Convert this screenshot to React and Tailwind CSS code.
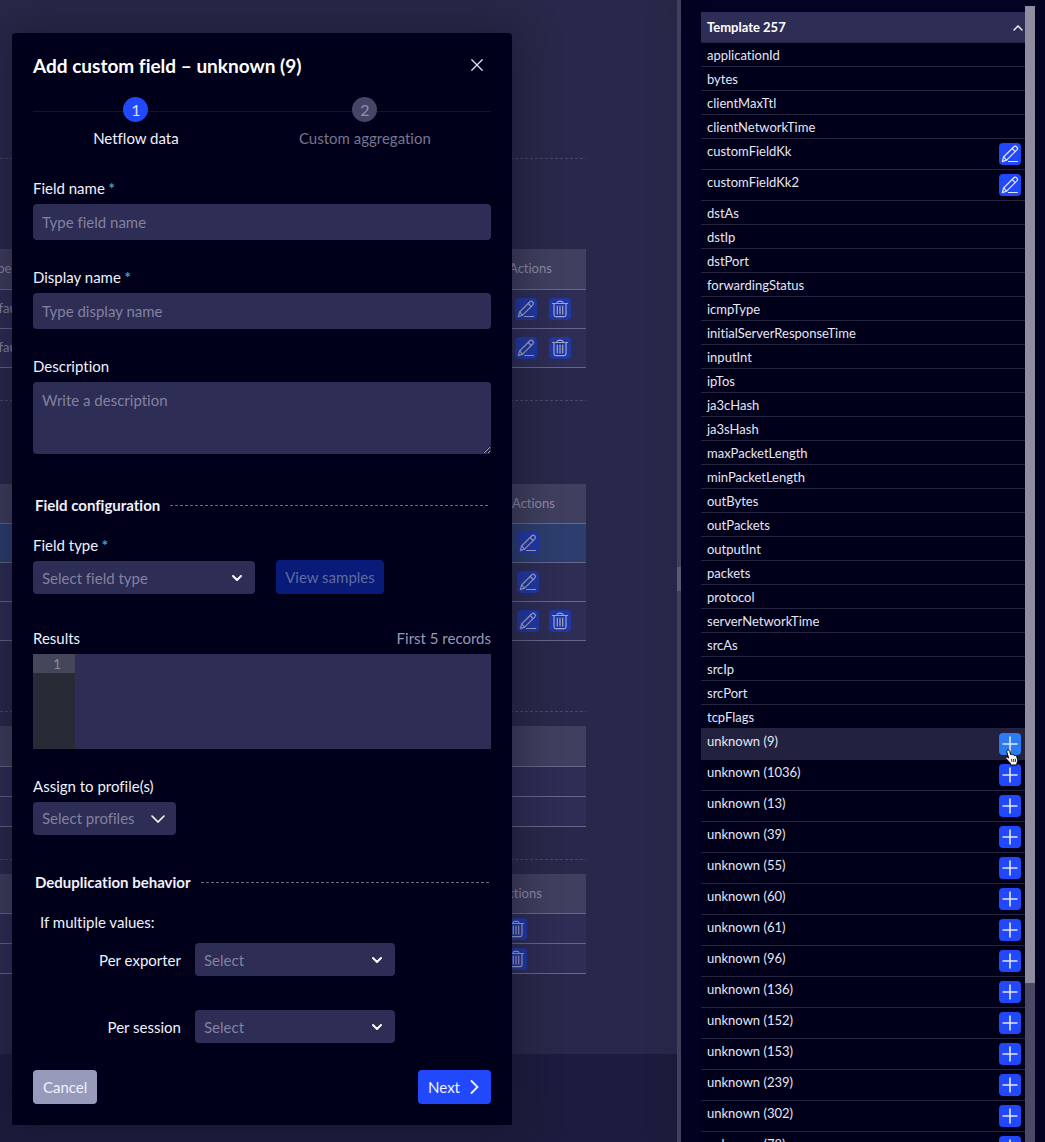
import React from "react";

const fields = [
  ["applicationId"], ["bytes"], ["clientMaxTtl"], ["clientNetworkTime"],
  ["customFieldKk", "edit"], ["customFieldKk2", "edit"],
  ["dstAs"], ["dstIp"], ["dstPort"], ["forwardingStatus"], ["icmpType"],
  ["initialServerResponseTime"], ["inputInt"], ["ipTos"], ["ja3cHash"], ["ja3sHash"],
  ["maxPacketLength"], ["minPacketLength"], ["outBytes"], ["outPackets"], ["outputInt"],
  ["packets"], ["protocol"], ["serverNetworkTime"], ["srcAs"], ["srcIp"], ["srcPort"], ["tcpFlags"],
  ["unknown (9)", "add", true], ["unknown (1036)", "add"], ["unknown (13)", "add"],
  ["unknown (39)", "add"], ["unknown (55)", "add"], ["unknown (60)", "add"],
  ["unknown (61)", "add"], ["unknown (96)", "add"], ["unknown (136)", "add"],
  ["unknown (152)", "add"], ["unknown (153)", "add"], ["unknown (239)", "add"],
  ["unknown (302)", "add"], ["unknown (78)", "add"],
];

function Pencil() {
  return (
    <svg viewBox="0 0 22 22" className="size-full" fill="none" stroke="currentColor" strokeWidth="1.2" strokeLinejoin="round" strokeLinecap="round" aria-hidden="true">
      <path d="M3.3 18.6 4.6 14 14.9 3.8c1.7-1.6 4.8 1.1 3 3.1L7.6 17.1 3.3 18.6Z" />
      <path d="m13.2 5.5 3 3.1M4.6 14l3 3.1M9.5 18.5h9" />
    </svg>
  );
}

function Trash() {
  return (
    <svg viewBox="0 0 22 22" className="size-full" fill="none" stroke="currentColor" strokeWidth="1.2" strokeLinejoin="round" strokeLinecap="round" aria-hidden="true">
      <path d="M3.5 5.5h15M8 5.2c0-1.5.4-1.9 1.4-1.9h3.2c1 0 1.4.4 1.4 1.9M5 5.7v11.1c0 1.2.6 1.8 1.7 1.8h8.6c1.1 0 1.7-.6 1.7-1.8V5.7M8.3 8v8M11 8v8M13.7 8v8" />
    </svg>
  );
}

function Plus() {
  return (
    <svg viewBox="0 0 22 22" className="size-full" fill="none" stroke="currentColor" strokeWidth="1.6" aria-hidden="true">
      <path d="M3.5 11h15M11 3.5v15" />
    </svg>
  );
}

function Chevron({ thin }) {
  return thin ? (
    <svg viewBox="0 0 14 8" className="w-[14px]" fill="none" stroke="currentColor" strokeWidth="1.6" strokeLinecap="round" aria-hidden="true">
      <path d="m1 1 6 6 6-6" />
    </svg>
  ) : (
    <svg viewBox="0 0 12 8" className="w-3" fill="none" stroke="currentColor" strokeWidth="2" strokeLinecap="round" strokeLinejoin="round" aria-hidden="true">
      <path d="m2 2 4 4 4-4" />
    </svg>
  );
}

function DimButton({ kind }) {
  return (
    <button type="button" aria-label={kind === "edit" ? "Edit" : "Delete"} className="block size-[22px] rounded-sm bg-[#2038a6] text-[#a3a5c9]">
      {kind === "edit" ? <Pencil /> : <Trash />}
    </button>
  );
}

function BackTable({ type, actions, row, rows, headPad, pad, gap }) {
  return (
    <table className="-ml-10 w-[calc(100%+40px)] table-fixed border-collapse text-left text-[13px] text-[#8d8ba8]">
      <thead>
        <tr className="h-10 border-b border-[#67678a] bg-[#3f3f5f]">
          <th className="pl-6 font-normal">{type}</th>
          <th className={`${headPad} font-normal`}>{actions}</th>
        </tr>
      </thead>
      <tbody>
        {rows.map((r, i) => (
          <tr key={i} className={`${row} border-b border-[#67678a] ${r.active ? "bg-[#2c3e6e]" : "bg-[#2d2d55]"}`}>
            <td className="pl-[22px]">{r.text}</td>
            <td className={pad}>
              <div className={`flex ${gap}`}>{r.icons.map((k) => <DimButton key={k} kind={k} />)}</div>
            </td>
          </tr>
        ))}
      </tbody>
    </table>
  );
}

const Dash = ({ color }) => (
  <svg className={`block h-px w-full ${color}`} aria-hidden="true">
    <line x1="0" y1="0.5" x2="100%" y2="0.5" stroke="currentColor" strokeDasharray="3 2" />
  </svg>
);

function SectionTitle({ children }) {
  return (
    <div className="flex items-center gap-2.5 px-0.5">
      <h3 className="shrink-0 text-[15px] leading-6 font-bold">{children}</h3>
      <Dash color="text-[#6b6b88]" />
    </div>
  );
}

function Label({ id, required, children }) {
  return (
    <label htmlFor={id} className="block text-[15px] leading-6">
      {children}{required && <span className="leading-none font-bold text-[#3aa5d2]"> *</span>}
    </label>
  );
}

function Select({ id, text, width, thin }) {
  return (
    <div className={`relative ${width}`}>
      <select id={id} defaultValue="" className={`block h-[33px] w-full appearance-none rounded bg-[#2d2d55] pr-8 pl-[9px] text-[15px] text-[#8381a0] outline-none ${thin ? "" : "pt-0.5"}`}>
        <option value="">{text}</option>
      </select>
      <span className={`pointer-events-none absolute inset-y-0 flex items-center text-white ${thin ? "right-[11px]" : "right-3"}`}>
        <Chevron thin={thin} />
      </span>
    </div>
  );
}

function HandCursor() {
  return (
    <svg viewBox="0 0 14 17" className="pointer-events-none absolute top-4 left-1.5 z-10 h-[17px] w-[14px]" aria-hidden="true">
      <path d="M3.2 1c1 0 1.5.8 1.7 1.7l.7 3c.5-.6 1.7-.5 2 .3.6-.5 1.6-.3 1.9.5.9-.4 1.9.1 2.2 1.1l.9 2.8c.3 1.500-.2 2.600-.7 3.600v2H5.500v-1.500C4.300 13.200 2.900 11.300 1.100 9.700.3 8.800 1.300 7.500 2.500 8.200l1.100.8L1.800 3C1.600 2 2.200 1 3.200 1Z" fill="white" stroke="black" strokeWidth="1" />
      <path d="m6.500 10 .5 3M8.500 10l.4 3M10.300 9.800l.3 3" stroke="black" strokeWidth=".8" />
    </svg>
  );
}

function Dialog() {
  return (
    <section role="dialog" aria-labelledby="title" className="absolute top-[33px] left-3 flex w-[500px] flex-col rounded-t bg-[#00001a] px-[21px] pt-5 pb-[21px] text-[#f1f1fa] shadow-[0_0_40px_8px_rgba(20,20,40,0.45)]">
      <header className="flex h-[26px] items-start justify-between">
        <h2 id="title" className="text-[19px] leading-[25px] font-bold text-white">Add custom field – unknown (9)</h2>
        <button type="button" aria-label="Close" className="mt-1.5 mr-2 text-[#e2e2f2]">
          <svg viewBox="0 0 12 12" className="size-3" fill="none" stroke="currentColor" strokeWidth="1.300" strokeLinecap="round" aria-hidden="true"><path d="m.8.8 10.400 10.400M11.200.8.8 11.200" /></svg>
        </button>
      </header>

      <div className="relative mt-[18px]">
        <div className="absolute top-[14px] h-px w-full bg-[#14142c]" />
        <ol className="relative flex justify-around text-[15px]">
          <li className="flex flex-col items-center gap-1">
            <span className="grid size-[25px] place-items-center rounded-full bg-[#2148fa] text-base leading-none text-[#d9e0ff]">1</span>
            <span className="leading-6">Netflow data</span>
          </li>
          <li className="flex flex-col items-center gap-1 text-[#77758e]">
            <span className="grid size-[25px] place-items-center rounded-full bg-[#454568] text-base leading-none text-[#9190ac]">2</span>
            <span className="leading-6">Custom aggregation</span>
          </li>
        </ol>
      </div>

      <form className="mt-[26px] flex flex-col">
        <div className="flex flex-col gap-[25px]">
          <div className="flex flex-col gap-1">
            <Label id="fname" required>Field name</Label>
            <input id="fname" placeholder="Type field name" className="h-9 rounded bg-[#2d2d55] px-[9px] text-[15px] outline-none placeholder:text-[#8381a0]" />
          </div>
          <div className="flex flex-col gap-1">
            <Label id="dname" required>Display name</Label>
            <input id="dname" placeholder="Type display name" className="h-9 rounded bg-[#2d2d55] px-[9px] text-[15px] outline-none placeholder:text-[#8381a0]" />
          </div>
          <div className="flex flex-col gap-1">
            <Label id="desc">Description</Label>
            <textarea id="desc" placeholder="Write a description" className="h-[72px] rounded bg-[#2d2d55] px-[9px] py-1.5 text-[15px] leading-6 outline-none placeholder:text-[#8381a0]" />
          </div>
        </div>

        <div className="mt-[39px]"><SectionTitle>Field configuration</SectionTitle></div>

        <div className="mt-4 flex items-end gap-[21px]">
          <div className="flex flex-col gap-1">
            <Label id="ftype" required>Field type</Label>
            <Select id="ftype" text="Select field type" width="w-[222px]" />
          </div>
          <button type="button" disabled className="h-[34px] w-[108px] rounded bg-[#081b78] text-[15px] text-[#5f6b9f]">View samples</button>
        </div>

        <div className="mt-8 flex flex-col gap-1">
          <div className="flex justify-between text-[15px] leading-6">
            <label htmlFor="results">Results</label>
            <span className="text-[#9a98b4]">First 5 records</span>
          </div>
          <div className="flex h-[95px] bg-[#2d2d55]">
            <div className="w-[42px] shrink-0 bg-[#282a36]">
              <div className="h-[19px] bg-[#44465a] pr-3.5 text-right text-sm leading-[19px] text-[#8a8b96]">1</div>
            </div>
            <textarea id="results" readOnly className="w-full resize-none bg-transparent outline-none" />
          </div>
        </div>

        <div className="mt-[25px] flex flex-col gap-1">
          <Label id="profiles">Assign to profile(s)</Label>
          <Select id="profiles" text="Select profiles" width="w-[143px]" thin />
        </div>

        <div className="mt-[35px]"><SectionTitle>Deduplication behavior</SectionTitle></div>

        <p className="mt-4 pl-[7px] text-[15px] leading-6">If multiple values:</p>
        <div className="mt-[9px] grid grid-cols-[148px_200px] items-center gap-x-3.5 gap-y-[34px]">
          <div className="text-right"><Label id="exporter">Per exporter</Label></div>
          <Select id="exporter" text="Select" width="w-full" />
          <div className="text-right"><Label id="session">Per session</Label></div>
          <Select id="session" text="Select" width="w-full" />
        </div>

        <footer className="mt-[27px] flex justify-between text-[15px]">
          <button type="button" className="h-[34px] rounded bg-[#989abb] px-2.5">Cancel</button>
          <button type="button" className="flex h-[34px] items-center gap-2.5 rounded bg-[#2148fa] pr-3 pl-2.5">
            Next
            <svg viewBox="0 0 9 14" className="w-[9px]" fill="none" stroke="currentColor" strokeWidth="1.800" strokeLinecap="round" aria-hidden="true"><path d="m1.500 1 6 6-6 6" /></svg>
          </button>
        </footer>
      </form>
    </section>
  );
}

export default function App() {
  return (
    <div className="relative flex h-screen overflow-hidden bg-[#020222] font-['Lato',sans-serif] [font-variant-ligatures:none]">
      <main className="min-w-0 flex-1 overflow-hidden bg-[#1c1c3e]">
        <div className="bg-[#28284a] pt-[158px] pr-[91px] pb-20">
          <Dash color="text-[#484868]" />
          <div className="mt-[90px]">
            <BackTable type="Type" actions="Actions" row="h-[39px]" headPad="pl-[236px]" pad="pl-[242px]" gap="gap-3"
              rows={[{ text: "Default", icons: ["edit", "trash"] }, { text: "Default", icons: ["edit", "trash"] }]} />
          </div>
          <div className="mt-8"><Dash color="text-[#484868]" /></div>
          <div className="mt-[83px]">
            <BackTable actions="Actions" row="h-[39px]" headPad="pl-[239px]" pad="pl-[244px]" gap="gap-2.5"
              rows={[{ active: true, icons: ["edit"] }, { icons: ["edit"] }, { icons: ["edit", "trash"] }]} />
          </div>
          <div className="mt-[70px]"><Dash color="text-[#484868]" /></div>
          <div className="mt-3.5">
            <BackTable row="h-[30px]" headPad="pl-[226px]" pad="pl-[232px]" gap="gap-2"
              rows={[{ icons: [] }, { icons: [] }]} />
          </div>
          <div className="mt-8"><Dash color="text-[#484868]" /></div>
          <div className="mt-3.5">
            <BackTable actions="Actions" row="h-[30px]" headPad="pl-[226px]" pad="pl-[232px]" gap="gap-2"
              rows={[{ icons: ["trash"] }, { icons: ["trash"] }]} />
          </div>
        </div>
      </main>

      <div className="flex w-1 shrink-0 items-center bg-[#40405d] shadow-[0_0_30px_rgba(10,10,30,0.4)]">
        <div className="mt-4 h-6 w-full bg-[#5a5a76]" />
      </div>

      <aside className="flex w-[364px] shrink-0 pt-1.5 pr-2.5 pl-5">
        <div className="mt-1.5 min-w-0 flex-1 self-start bg-[#00001a] text-[13px] text-[#e6e6f4]">
          <button type="button" aria-expanded="true" className="flex h-[31px] w-full items-center justify-between border-b border-[#24243f] bg-[#2d2d55] pt-px pr-0.5 pl-1.5 font-bold text-white">
            Template 257
            <svg viewBox="0 0 10 6" className="w-2.5" fill="none" stroke="currentColor" strokeWidth="1.300" strokeLinecap="round" aria-hidden="true"><path d="m1 5 4-4 4 4" /></svg>
          </button>
          <ul>
            {fields.map(([name, action, hover]) => (
              <li key={name} className={`flex items-start justify-between border-b border-[#24243f] pr-1 pl-1.5 leading-[25px] ${action ? "h-[31px]" : "h-6"} ${hover ? "bg-[#222240]" : ""}`}>
                <span>{name}</span>
                {action && (
                  <span className="relative mt-1">
                    <button type="button" aria-label={`${action} ${name}`} className={`block size-[22px] rounded-sm text-[#dfe5ff] ${hover ? "bg-[#2c7bf2]" : "bg-[#2148fa]"}`}>
                      {action === "edit" ? <Pencil /> : <Plus />}
                    </button>
                    {hover && <HandCursor />}
                  </span>
                )}
              </li>
            ))}
          </ul>
        </div>
        <div className="w-2.5 shrink-0 bg-[#4b4965]">
          <div className="h-[86%] bg-[#8f8c9f]" />
        </div>
      </aside>

      <Dialog />
    </div>
  );
}
